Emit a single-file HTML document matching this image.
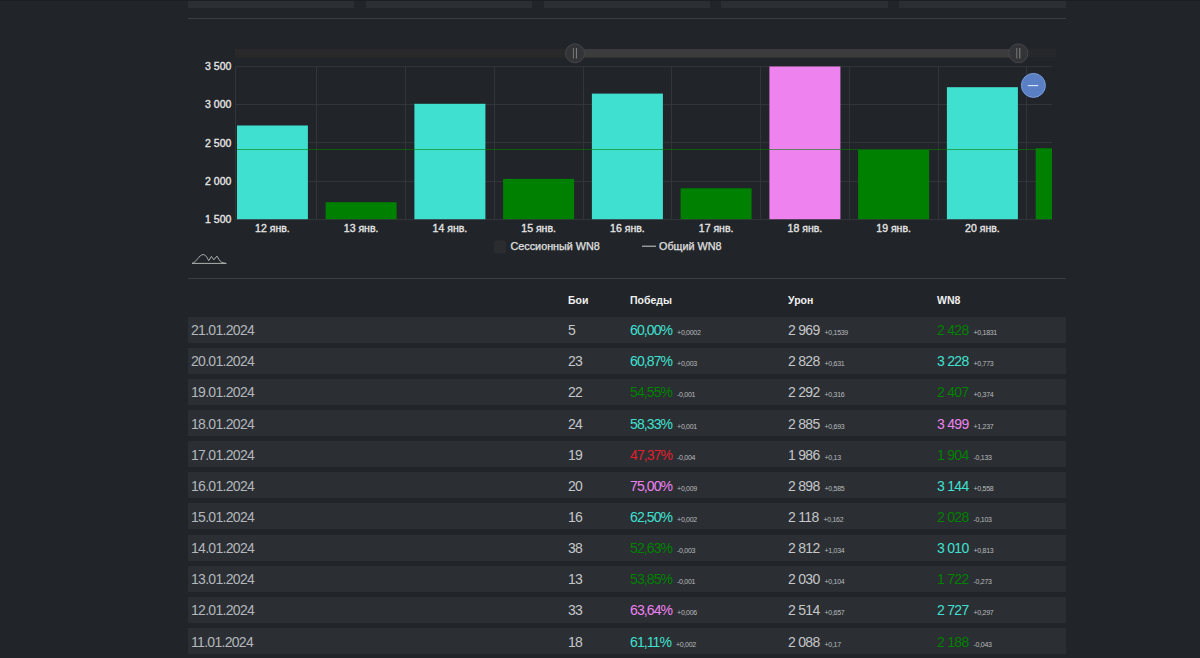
<!DOCTYPE html>
<html><head><meta charset="utf-8"><style>
html,body{margin:0;padding:0;background:#212529;width:1200px;height:658px;overflow:hidden;font-family:"Liberation Sans",sans-serif;}
.box{position:absolute;top:0;height:7.5px;background:#2b2f34;}
.hr{position:absolute;left:188px;width:878px;height:1px;background:#3b3f45;}
svg{position:absolute;left:0;top:0;}
.ax{font-size:10.5px;fill:#e4e4e4;stroke:#e4e4e4;stroke-width:0.35px;font-family:"Liberation Sans",sans-serif;}
.lg{font-size:10.8px;fill:#e0e0e0;stroke:#e0e0e0;stroke-width:0.25px;font-family:"Liberation Sans",sans-serif;}
.th{position:absolute;top:293px;font-size:10.5px;font-weight:bold;color:#f0f0f0;line-height:14px;}
.row{position:absolute;left:188px;width:878px;height:26px;background:#2b2f34;}
.c{position:absolute;top:0.5px;line-height:26px;font-size:14px;letter-spacing:-0.7px;white-space:nowrap;}
.p{letter-spacing:-0.9px;}
.d{color:#b3b7bb;}
.n{color:#c4c6c8;}
small{font-size:7px;letter-spacing:-0.3px;color:#b8babc;margin-left:5px;}
</style></head><body>
<div class="box" style="left:188px;width:166px"></div>
<div class="box" style="left:366px;width:166px"></div>
<div class="box" style="left:544px;width:166px"></div>
<div class="box" style="left:721px;width:167px"></div>
<div class="box" style="left:899px;width:167px"></div>
<div style="position:absolute;left:0;top:0;width:1200px;height:1px;background:#1c1f22"></div>
<div class="hr" style="top:18px"></div>
<svg width="1200" height="290" viewBox="0 0 1200 290">
<rect x="235" y="66" width="817" height="1" fill="#313439"/><text x="231.4" y="70.2" text-anchor="end" class="ax">3 500</text><rect x="235" y="104" width="817" height="1" fill="#313439"/><text x="231.4" y="108.4" text-anchor="end" class="ax">3 000</text><rect x="235" y="142" width="817" height="1" fill="#313439"/><text x="231.4" y="146.6" text-anchor="end" class="ax">2 500</text><rect x="235" y="181" width="817" height="1" fill="#313439"/><text x="231.4" y="184.8" text-anchor="end" class="ax">2 000</text><rect x="235" y="219" width="817" height="1" fill="#313439"/><text x="231.4" y="223.0" text-anchor="end" class="ax">1 500</text><rect x="235" y="66" width="1" height="154" fill="#313439"/><rect x="316" y="66" width="1" height="154" fill="#313439"/><rect x="405" y="66" width="1" height="154" fill="#313439"/><rect x="494" y="66" width="1" height="154" fill="#313439"/><rect x="583" y="66" width="1" height="154" fill="#313439"/><rect x="671" y="66" width="1" height="154" fill="#313439"/><rect x="760" y="66" width="1" height="154" fill="#313439"/><rect x="849" y="66" width="1" height="154" fill="#313439"/><rect x="938" y="66" width="1" height="154" fill="#313439"/><rect x="1026" y="66" width="1" height="154" fill="#313439"/><defs><clipPath id="cp"><rect x="237" y="0" width="815" height="230"/></clipPath></defs><g clip-path="url(#cp)"><rect x="236.9" y="125.5" width="71.0" height="93.7" fill="#40e0d0"/><rect x="325.6" y="202.2" width="71.0" height="17.0" fill="#008000"/><rect x="414.4" y="103.8" width="71.0" height="115.4" fill="#40e0d0"/><rect x="503.1" y="178.9" width="71.0" height="40.3" fill="#008000"/><rect x="591.9" y="93.6" width="71.0" height="125.6" fill="#40e0d0"/><rect x="680.6" y="188.3" width="71.0" height="30.9" fill="#008000"/><rect x="769.4" y="66.5" width="71.0" height="152.7" fill="#ee82ee"/><rect x="858.1" y="149.9" width="71.0" height="69.3" fill="#008000"/><rect x="946.9" y="87.2" width="71.0" height="132.0" fill="#40e0d0"/><rect x="1035.7" y="148.3" width="71.0" height="70.9" fill="#008000"/></g><text x="272.4" y="232" text-anchor="middle" class="ax">12 янв.</text><text x="361.1" y="232" text-anchor="middle" class="ax">13 янв.</text><text x="449.9" y="232" text-anchor="middle" class="ax">14 янв.</text><text x="538.6" y="232" text-anchor="middle" class="ax">15 янв.</text><text x="627.4" y="232" text-anchor="middle" class="ax">16 янв.</text><text x="716.1" y="232" text-anchor="middle" class="ax">17 янв.</text><text x="804.9" y="232" text-anchor="middle" class="ax">18 янв.</text><text x="893.6" y="232" text-anchor="middle" class="ax">19 янв.</text><text x="982.4" y="232" text-anchor="middle" class="ax">20 янв.</text><rect x="237" y="149" width="815" height="1" fill="#008000" fill-opacity="0.6"/><rect x="235" y="49" width="340" height="8.5" fill="#29292a"/><rect x="575" y="49" width="443" height="8.5" fill="#3c3c3d"/><rect x="1018" y="49" width="38" height="8.5" fill="#26282b"/><circle cx="575" cy="53.3" r="9.5" fill="#333437" stroke="#434548" stroke-width="1"/><line x1="573.4" y1="48" x2="573.4" y2="58.5" stroke="#7e7e7e" stroke-width="0.9"/><line x1="576.4" y1="48" x2="576.4" y2="58.5" stroke="#8e8e8e" stroke-width="0.9"/><circle cx="1018.4" cy="53.3" r="9.5" fill="#333437" stroke="#434548" stroke-width="1"/><line x1="1016.8" y1="48" x2="1016.8" y2="58.5" stroke="#7e7e7e" stroke-width="0.9"/><line x1="1019.8" y1="48" x2="1019.8" y2="58.5" stroke="#8e8e8e" stroke-width="0.9"/><circle cx="1033.4" cy="85.4" r="13" fill="#1c2a44"/><circle cx="1033.4" cy="85.4" r="12" fill="#5a7fc4" stroke="#7d9bd2" stroke-width="1"/><line x1="1027.8" y1="85.6" x2="1038.2" y2="85.6" stroke="#dde8ff" stroke-width="1.1"/><path d="M226.3,263.4 L192,263.4 C196,262.8 199.2,254.6 203.2,254.6 C206,254.6 207.5,258.5 208.7,260.7 L211.4,256.4 L213.9,259.8 L216.9,256.1 C218.5,258.5 220,261.5 221.5,262.2 C223,263 225,263.4 226.3,263.4" fill="none" stroke="#b0b0b0" stroke-width="1" stroke-linejoin="round"/><rect x="494" y="240.5" width="12" height="13" rx="2" fill="#2a2c30"/><text x="510.5" y="250" class="lg">Сессионный WN8</text><line x1="642" y1="246.2" x2="656" y2="246.2" stroke="#d0d0d0" stroke-width="1"/><text x="659" y="250" class="lg">Общий WN8</text>
</svg>
<div class="hr" style="top:278px"></div>
<div class="th" style="left:568px">Бои</div>
<div class="th" style="left:630px">Победы</div>
<div class="th" style="left:788px">Урон</div>
<div class="th" style="left:937px">WN8</div>
<div class="row" style="top:316.60px"><span class="c d" style="left:3px">21.01.2024</span><span class="c n" style="left:380px">5</span><span class="c p" style="left:442px;color:#40e0d0">60,00%<small>+0,0002</small></span><span class="c n" style="left:600px">2 969<small>+0,1539</small></span><span class="c" style="left:749px;color:#008000">2 428<small>+0,1831</small></span></div><div class="row" style="top:347.74px"><span class="c d" style="left:3px">20.01.2024</span><span class="c n" style="left:380px">23</span><span class="c p" style="left:442px;color:#40e0d0">60,87%<small>+0,003</small></span><span class="c n" style="left:600px">2 828<small>+0,631</small></span><span class="c" style="left:749px;color:#40e0d0">3 228<small>+0,773</small></span></div><div class="row" style="top:378.88px"><span class="c d" style="left:3px">19.01.2024</span><span class="c n" style="left:380px">22</span><span class="c p" style="left:442px;color:#008000">54,55%<small>-0,001</small></span><span class="c n" style="left:600px">2 292<small>+0,316</small></span><span class="c" style="left:749px;color:#008000">2 407<small>+0,374</small></span></div><div class="row" style="top:410.02px"><span class="c d" style="left:3px">18.01.2024</span><span class="c n" style="left:380px">24</span><span class="c p" style="left:442px;color:#40e0d0">58,33%<small>+0,001</small></span><span class="c n" style="left:600px">2 885<small>+0,693</small></span><span class="c" style="left:749px;color:#ee82ee">3 499<small>+1,237</small></span></div><div class="row" style="top:441.16px"><span class="c d" style="left:3px">17.01.2024</span><span class="c n" style="left:380px">19</span><span class="c p" style="left:442px;color:#e0202c">47,37%<small>-0,004</small></span><span class="c n" style="left:600px">1 986<small>+0,13</small></span><span class="c" style="left:749px;color:#008000">1 904<small>-0,133</small></span></div><div class="row" style="top:472.30px"><span class="c d" style="left:3px">16.01.2024</span><span class="c n" style="left:380px">20</span><span class="c p" style="left:442px;color:#ee82ee">75,00%<small>+0,009</small></span><span class="c n" style="left:600px">2 898<small>+0,585</small></span><span class="c" style="left:749px;color:#40e0d0">3 144<small>+0,558</small></span></div><div class="row" style="top:503.44px"><span class="c d" style="left:3px">15.01.2024</span><span class="c n" style="left:380px">16</span><span class="c p" style="left:442px;color:#40e0d0">62,50%<small>+0,002</small></span><span class="c n" style="left:600px">2 118<small>+0,162</small></span><span class="c" style="left:749px;color:#008000">2 028<small>-0,103</small></span></div><div class="row" style="top:534.58px"><span class="c d" style="left:3px">14.01.2024</span><span class="c n" style="left:380px">38</span><span class="c p" style="left:442px;color:#008000">52,63%<small>-0,003</small></span><span class="c n" style="left:600px">2 812<small>+1,034</small></span><span class="c" style="left:749px;color:#40e0d0">3 010<small>+0,813</small></span></div><div class="row" style="top:565.72px"><span class="c d" style="left:3px">13.01.2024</span><span class="c n" style="left:380px">13</span><span class="c p" style="left:442px;color:#008000">53,85%<small>-0,001</small></span><span class="c n" style="left:600px">2 030<small>+0,104</small></span><span class="c" style="left:749px;color:#008000">1 722<small>-0,273</small></span></div><div class="row" style="top:596.86px"><span class="c d" style="left:3px">12.01.2024</span><span class="c n" style="left:380px">33</span><span class="c p" style="left:442px;color:#ee82ee">63,64%<small>+0,006</small></span><span class="c n" style="left:600px">2 514<small>+0,657</small></span><span class="c" style="left:749px;color:#40e0d0">2 727<small>+0,297</small></span></div><div class="row" style="top:628.00px"><span class="c d" style="left:3px">11.01.2024</span><span class="c n" style="left:380px">18</span><span class="c p" style="left:442px;color:#40e0d0">61,11%<small>+0,002</small></span><span class="c n" style="left:600px">2 088<small>+0,17</small></span><span class="c" style="left:749px;color:#008000">2 188<small>-0,043</small></span></div>
</body></html>
